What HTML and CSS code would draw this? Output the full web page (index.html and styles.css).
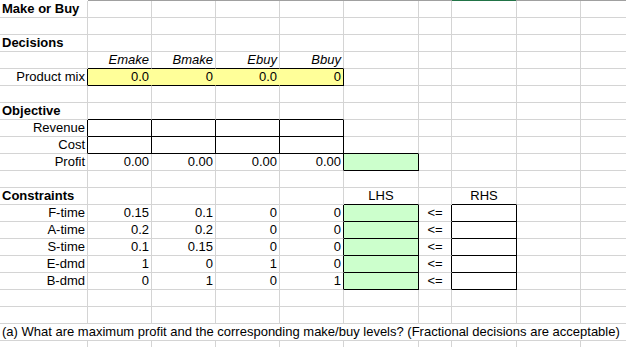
FILE: index.html
```html
<!DOCTYPE html>
<html>
<head>
<meta charset="utf-8">
<link rel="stylesheet" href="styles.css">
</head>
<body>
<div class="topbar"><span class="blank"></span><span class="grey1"></span><span class="sel"></span><span class="grey2"></span></div>
<div class="sheet">
  <div class="h">Make or Buy</div><div></div><div></div><div></div><div></div><div></div><div></div><div></div><div></div><div></div>
  <div></div><div></div><div></div><div></div><div></div><div></div><div></div><div></div><div></div><div></div>
  <div class="h">Decisions</div><div></div><div></div><div></div><div></div><div></div><div></div><div></div><div></div><div></div>
  <div></div><div class="it kb">Emake</div><div class="it kb">Bmake</div><div class="it kb">Ebuy</div><div class="it kb">Bbuy</div><div></div><div></div><div></div><div></div><div></div>
  <div class="kr">Product mix</div><div class="y kb">0.0</div><div class="y kb">0</div><div class="y kb">0.0</div><div class="y kb kr">0</div><div></div><div></div><div></div><div></div><div></div>
  <div></div><div></div><div></div><div></div><div></div><div></div><div></div><div></div><div></div><div></div>
  <div class="h">Objective</div><div class="kb"></div><div class="kb"></div><div class="kb"></div><div class="kb"></div><div></div><div></div><div></div><div></div><div></div>
  <div class="kr">Revenue</div><div class="kr kb"></div><div class="kr kb"></div><div class="kr kb"></div><div class="kr kb"></div><div></div><div></div><div></div><div></div><div></div>
  <div class="kr">Cost</div><div class="kr kb"></div><div class="kr kb"></div><div class="kr kb"></div><div class="kr kb"></div><div class="kb"></div><div></div><div></div><div></div><div></div>
  <div>Profit</div><div>0.00</div><div>0.00</div><div>0.00</div><div class="kr">0.00</div><div class="g kr kb"></div><div></div><div></div><div></div><div></div>
  <div></div><div></div><div></div><div></div><div></div><div></div><div></div><div></div><div></div><div></div>
  <div class="h">Constraints</div><div></div><div></div><div></div><div></div><div class="ctr kb">LHS</div><div></div><div class="ctr kb">RHS</div><div></div><div></div>
  <div>F-time</div><div>0.15</div><div>0.1</div><div>0</div><div class="kr">0</div><div class="g kr kb"></div><div class="ctr kr">&lt;=</div><div class="kr kb"></div><div></div><div></div>
  <div>A-time</div><div>0.2</div><div>0.2</div><div>0</div><div class="kr">0</div><div class="g kr kb"></div><div class="ctr kr">&lt;=</div><div class="kr kb"></div><div></div><div></div>
  <div>S-time</div><div>0.1</div><div>0.15</div><div>0</div><div class="kr">0</div><div class="g kr kb"></div><div class="ctr kr">&lt;=</div><div class="kr kb"></div><div></div><div></div>
  <div>E-dmd</div><div>1</div><div>0</div><div>1</div><div class="kr">0</div><div class="g kr kb"></div><div class="ctr kr">&lt;=</div><div class="kr kb"></div><div></div><div></div>
  <div>B-dmd</div><div>0</div><div>1</div><div>0</div><div class="kr">1</div><div class="g kr kb"></div><div class="ctr kr">&lt;=</div><div class="kr kb"></div><div></div><div></div>
  <div></div><div></div><div></div><div></div><div></div><div></div><div></div><div></div><div></div><div></div>
  <div></div><div></div><div></div><div></div><div></div><div></div><div></div><div></div><div></div><div></div>
  <div class="q">(a) What are maximum profit and the corresponding make/buy levels? (Fractional decisions are acceptable)</div>
  <div></div><div></div><div></div><div></div><div></div><div></div><div></div><div></div><div></div><div></div>
</div>
</body>
</html>
```
FILE: styles.css
```css
html, body {
  margin: 0;
  padding: 0;
  background: #ffffff;
  overflow: hidden;
}
body {
  font-family: "Liberation Sans", Arial, sans-serif;
  font-size: 13px;
  color: #000000;
}
.topbar {
  display: flex;
  height: 1px;
  width: 626px;
}
.topbar .blank { width: 88px; }
.topbar .grey1 { width: 364px; background: #a0a0a0; }
.topbar .sel { width: 64px; background: #217346; }
.topbar .grey2 { flex: 1; background: #a0a0a0; }
.sheet {
  display: grid;
  grid-template-columns: 88px 64px 64px 64px 64px 75px 33px 65px 64px 46px;
  grid-auto-rows: 17px;
  width: 626px;
  overflow: hidden;
}
.sheet > div {
  box-sizing: border-box;
  border-right: 1px solid #d4d4d4;
  border-bottom: 1px solid #d4d4d4;
  line-height: 16px;
  padding: 0 2px;
  white-space: nowrap;
  text-align: right;
}
.sheet > .h {
  font-weight: bold;
  text-align: left;
}
.sheet > .it { font-style: italic; }
.sheet > .ctr { text-align: center; }
.sheet > .y {
  background: #ffff99;
  border-right-color: #ffff99;
}
.sheet > .g { background: #ccffcc; }
.sheet > .kr { border-right-color: #000000; }
.sheet > .kb { border-bottom-color: #000000; }
.sheet > .q {
  grid-column: 1 / -1;
  text-align: left;
  overflow: visible;
}
```
